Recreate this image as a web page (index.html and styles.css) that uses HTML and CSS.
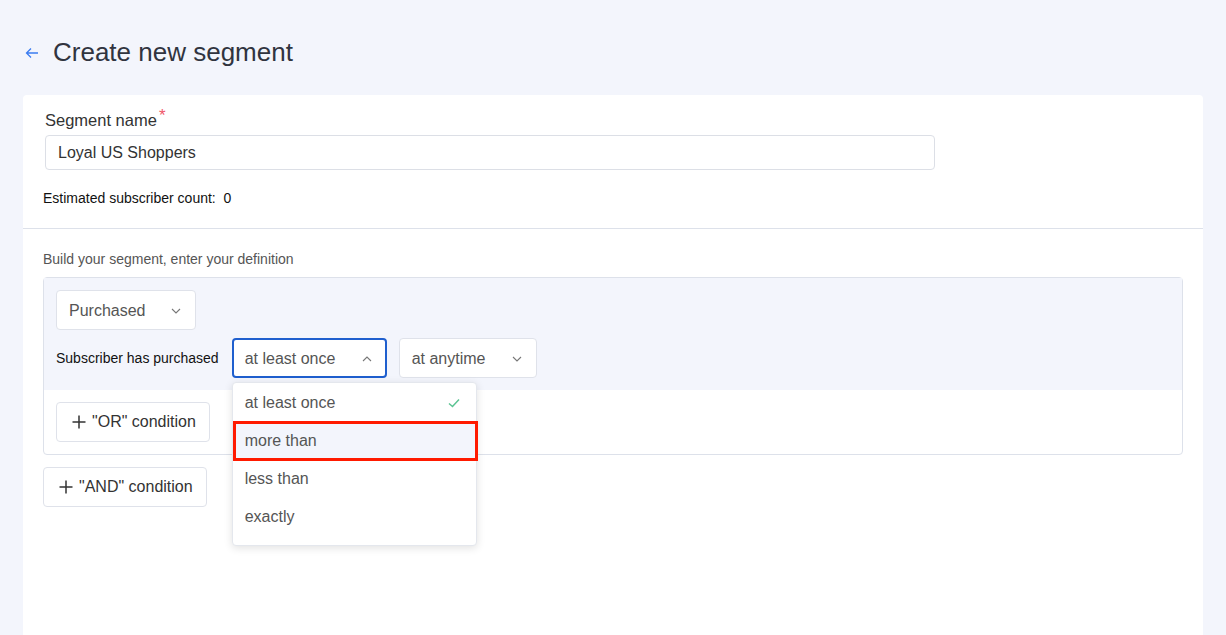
FILE: index.html
```html
<!DOCTYPE html>
<html lang="en">
<head>
    <meta charset="UTF-8">
    <meta name="viewport" content="width=device-width, initial-scale=1.0">
    <title>Create new segment</title>
    <link rel="stylesheet" href="styles.css">
</head>
<body>
    <div class="page">
        <div class="page-header">
            <a class="back" href="#">
                <svg width="14" height="12" viewBox="0 0 14 12"><path d="M13 6H2M6 1.5L1.5 6L6 10.5" fill="none" stroke="#3b7cf0" stroke-width="1.3"/></svg>
            </a>
            <h1>Create new segment</h1>
        </div>

        <div class="card">
            <div class="card-top">
                <label class="field-label">Segment name<span class="req">*</span></label>
                <input class="text-input" type="text" value="Loyal US Shoppers">
                <div class="estimate">Estimated subscriber count:&nbsp; 0</div>
            </div>

            <div class="card-body">
                <div class="hint">Build your segment, enter your definition</div>

                <div class="condition-box">
                    <div class="condition">
                        <div class="select select-type">
                            <span>Purchased</span>
                            <svg class="chev" width="10" height="6" viewBox="0 0 10 6"><path d="M1 1l4 4 4-4" fill="none" stroke="#777" stroke-width="1.1"/></svg>
                        </div>
                        <div class="condition-row">
                            <span class="row-label">Subscriber has purchased</span>
                            <div class="select-wrap">
                                <div class="select select-freq open">
                                    <span>at least once</span>
                                    <svg class="chev" width="10" height="6" viewBox="0 0 10 6"><path d="M1 5l4-4 4 4" fill="none" stroke="#777" stroke-width="1.1"/></svg>
                                </div>
                                <ul class="dropdown">
                                    <li class="selected">at least once
                                        <svg width="12" height="10" viewBox="0 0 12 10"><path d="M1 5.5l3.5 3L11 1.5" fill="none" stroke="#5cc493" stroke-width="1.5"/></svg>
                                    </li>
                                    <li class="hover">more than</li>
                                    <li>less than</li>
                                    <li>exactly</li>
                                </ul>
                            </div>
                            <div class="select select-time">
                                <span>at anytime</span>
                                <svg class="chev" width="10" height="6" viewBox="0 0 10 6"><path d="M1 1l4 4 4-4" fill="none" stroke="#777" stroke-width="1.1"/></svg>
                            </div>
                        </div>
                    </div>
                    <div class="condition-actions">
                        <button class="btn">
                            <svg class="plus" width="14" height="14" viewBox="0 0 14 14"><path d="M7 0.5v13M0.5 7h13" stroke="#333" stroke-width="1.5"/></svg>"OR" condition
                        </button>
                    </div>
                </div>

                <button class="btn btn-and">
                    <svg class="plus" width="14" height="14" viewBox="0 0 14 14"><path d="M7 0.5v13M0.5 7h13" stroke="#333" stroke-width="1.5"/></svg>"AND" condition
                </button>
            </div>
        </div>
    </div>
</body>
</html>
```

FILE: styles.css
```css
body {
    margin: 0;
    padding: 0;
    background: #f3f5fc;
    font-family: "Liberation Sans", Arial, sans-serif;
    color: #333;
}
.page {
    padding: 0 23px;
    height: 635px;
    overflow: hidden;
}
.page-header {
    display: flex;
    align-items: center;
    height: 95px;
    padding-top: 10px;
    box-sizing: border-box;
}
.back {
    display: flex;
    width: 28px;
    padding-left: 2px;
}
h1 {
    margin: 0;
    font-size: 26px;
    font-weight: 400;
    color: #30343f;
}
.card {
    background: #fff;
    border-radius: 4px;
    height: 560px;
}
.card-top {
    padding: 15px 20px 21px 20px;
    border-bottom: 1px solid #dde1ea;
}
.field-label {
    display: block;
    height: 20px;
    margin-left: 2px;
    font-size: 16.5px;
    line-height: 20px;
    color: #333;
}
.req {
    color: #f0566a;
    font-size: 17px;
    line-height: 0;
    position: relative;
    top: -5px;
    margin-left: 2px;
}
.text-input {
    display: block;
    margin: 5px 0 0 2px;
    width: 890px;
    height: 35px;
    box-sizing: border-box;
    border: 1px solid #dcdfe6;
    border-radius: 4px;
    padding: 0 12px;
    font-family: inherit;
    font-size: 16px;
    color: #333;
}
.estimate {
    margin-top: 19px;
    font-size: 14px;
    line-height: 18px;
    color: #111;
}
.card-body {
    padding: 21px 20px 20px;
}
.hint {
    font-size: 14px;
    line-height: 18px;
    color: #555;
    margin-bottom: 9px;
}
.condition-box {
    border: 1px solid #dde1ea;
    border-radius: 4px;
}
.condition {
    background: #f3f5fc;
    padding: 12px;
    display: flex;
    flex-direction: column;
    gap: 8px;
}
.select {
    display: flex;
    align-items: center;
    justify-content: space-between;
    height: 40px;
    box-sizing: border-box;
    padding: 1px 14px 0 12px;
    background: #fff;
    border: 1px solid #dfe2ea;
    border-radius: 4px;
    font-size: 16px;
    color: #555;
}
.select-type {
    width: 140px;
}
.condition-row {
    display: flex;
    align-items: center;
}
.row-label {
    font-size: 14px;
    color: #111;
    margin-right: 13px;
}
.select-wrap {
    position: relative;
    margin-right: 12px;
}
.select-freq {
    width: 155px;
}
.select.open {
    border: 2px solid #1f5fce;
    padding: 1px 13px 0 11px;
}
.select-time {
    width: 138px;
}
.dropdown {
    position: absolute;
    top: 44px;
    left: 0;
    width: 245px;
    margin: 0;
    padding: 1px 0 9px;
    list-style: none;
    background: #fff;
    border: 1px solid #e4e7ed;
    border-radius: 4px;
    box-shadow: 0 2px 8px rgba(0, 0, 0, 0.12);
    box-sizing: border-box;
    z-index: 5;
}
.dropdown li {
    position: relative;
    display: flex;
    align-items: center;
    justify-content: space-between;
    height: 38px;
    padding: 0 16px 0 12px;
    font-size: 16px;
    color: #555;
}
.dropdown li.hover {
    background: #f3f5fc;
}
.dropdown li.hover::after {
    content: "";
    position: absolute;
    top: -1px;
    left: 0;
    right: -2px;
    bottom: -1px;
    border: 3px solid #ff1a00;
}
.condition-actions {
    padding: 12px;
}
.btn {
    display: inline-flex;
    align-items: center;
    height: 40px;
    padding: 0 13px 0 15px;
    background: #fff;
    border: 1px solid #dfe2ea;
    border-radius: 4px;
    font-family: inherit;
    font-size: 16px;
    color: #333;
    cursor: pointer;
}
.plus {
    margin-right: 6px;
}
.btn-and {
    margin-top: 12px;
}
```
